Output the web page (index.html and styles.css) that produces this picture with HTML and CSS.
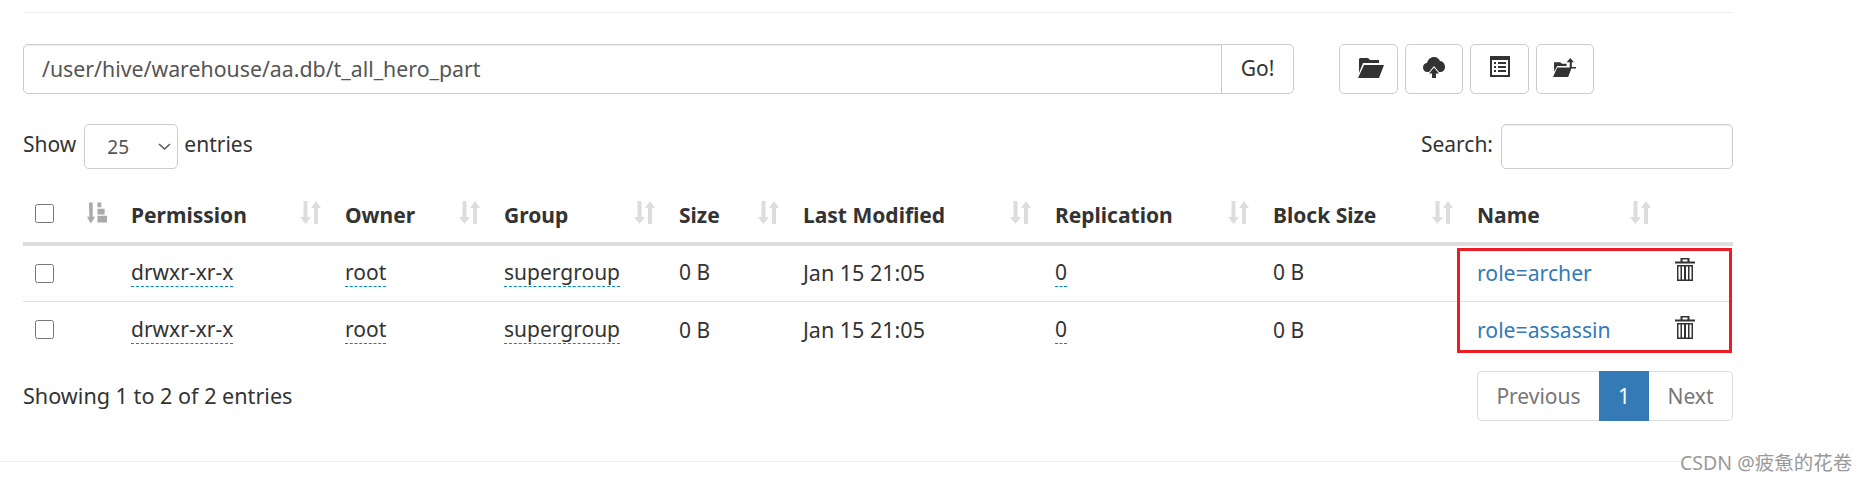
FILE: index.html
```html
<!DOCTYPE html>
<html lang="en">
<head>
<meta charset="utf-8">
<title>Browse Directory</title>
<link rel="stylesheet" href="styles.css">
</head>
<body>
<svg class="defs" width="0" height="0" aria-hidden="true">
  <symbol id="sort" viewBox="0 0 21 23"><path d="M3.500 0h4v16h3.500l-5.500 7-5.500-7h3.500z M16 0l5 7h-3v16h-4V7h-3z"/></symbol>
  <symbol id="sorted" viewBox="0 0 21 22"><path d="M2 0h4v15h2.500l-4.500 7-4-7h2.500z M11 0h4v5h-4z M11 6.500h7.500v6h-7.500z M11 14h10v7h-10z"/></symbol>
  <symbol id="folder" viewBox="0 0 26 20"><path d="M2 0h8l2 2h9v3H5L1 15V1z M6 7h20l-5 13H0z"/></symbol>
  <symbol id="cloud" viewBox="0 0 22 21"><path d="M4 15C1 15 0 12 0 10 0 8 2 6 4 6 5 2 8 0 11 0c3 0 5 2 6 4 3 0 5 3 5 6s-2 5-5 5h-1l-5-6-5 6z M11 10.500l5 6h-3v4.500h-4v-4.500h-3z"/></symbol>
  <symbol id="list" viewBox="0 0 20 21"><path fill-rule="evenodd" d="M0 0h20v21H0z M2 4v15h16V4z M4 6h2v2H4z M8 6h8v2H8z M4 10h2v2H4z M8 10h8v2H8z M4 14h2v2H4z M8 14h8v2H8z"/></symbol>
  <symbol id="folderup" viewBox="0 0 22 18"><path d="M1 4h6l1.500 1.500H13v2H4L1 13z M4 9h14l-3.500 9H0z M16.500 0l3.500 4h-2v4.500h4V10h-6V4h-3z"/></symbol>
  <symbol id="trash" viewBox="0 0 20 23"><path fill-rule="evenodd" d="M5.500 0h9v3.500H20v2H0v-2h5.500z M7.500 1.500v2h5v-2z M2 7h16v16H2z M3.500 8.500v13h2v-13z M7 8.500v13h2v-13z M11 8.500v13h2v-13z M14.500 8.500v13h2v-13z"/></symbol>
  <symbol id="chev" viewBox="0 0 13 7"><path d="M1 1l5.500 5L12 1" fill="none" stroke="#555" stroke-width="1.500"/></symbol>
</svg>
<div class="page">
  <hr class="top-rule">
  <div class="toolbar">
    <div class="path-group">
      <input class="path-input" type="text" value="/user/hive/warehouse/aa.db/t_all_hero_part">
      <button class="btn go">Go!</button>
    </div>
    <div class="actions">
      <button class="btn icon-btn"><svg class="ic-folder"><use href="#folder"/></svg></button>
      <button class="btn icon-btn"><svg class="ic-cloud"><use href="#cloud"/></svg></button>
      <button class="btn icon-btn"><svg class="ic-list"><use href="#list"/></svg></button>
      <button class="btn icon-btn"><svg class="ic-folderup"><use href="#folderup"/></svg></button>
    </div>
  </div>
  <div class="controls">
    <label class="length">Show <span class="select-wrap"><select class="length-select"><option>25</option></select><svg class="chev"><use href="#chev"/></svg></span> entries</label>
    <label class="search">Search: <input class="search-input" type="text"></label>
  </div>
  <table class="files">
    <colgroup>
      <col class="c0"><col class="c1"><col class="c2"><col class="c3"><col class="c4"><col class="c5"><col class="c6"><col class="c7"><col class="c8"><col class="c9"><col class="c10">
    </colgroup>
    <thead>
      <tr>
        <th><input class="check head-check" type="checkbox"></th>
        <th><div class="th-in end"><svg class="sort-on"><use href="#sorted"/></svg></div></th>
        <th><div class="th-in">Permission<svg class="sort"><use href="#sort"/></svg></div></th>
        <th><div class="th-in">Owner<svg class="sort"><use href="#sort"/></svg></div></th>
        <th><div class="th-in">Group<svg class="sort"><use href="#sort"/></svg></div></th>
        <th><div class="th-in">Size<svg class="sort"><use href="#sort"/></svg></div></th>
        <th><div class="th-in">Last Modified<svg class="sort"><use href="#sort"/></svg></div></th>
        <th><div class="th-in">Replication<svg class="sort"><use href="#sort"/></svg></div></th>
        <th><div class="th-in">Block Size<svg class="sort"><use href="#sort"/></svg></div></th>
        <th><div class="th-in">Name<svg class="sort"><use href="#sort"/></svg></div></th>
        <th></th>
      </tr>
    </thead>
    <tbody>
      <tr>
        <td><input class="check" type="checkbox"></td><td></td>
        <td><span class="edit">drwxr-xr-x</span></td>
        <td><span class="edit">root</span></td>
        <td><span class="edit">supergroup</span></td>
        <td>0 B</td>
        <td class="date">Jan 15 21:05</td>
        <td><span class="edit">0</span></td>
        <td>0 B</td>
        <td><a class="link" href="#">role=archer</a></td>
        <td><svg class="ic-trash"><use href="#trash"/></svg></td>
      </tr>
      <tr>
        <td><input class="check" type="checkbox"></td><td></td>
        <td><span class="edit">drwxr-xr-x</span></td>
        <td><span class="edit">root</span></td>
        <td><span class="edit">supergroup</span></td>
        <td>0 B</td>
        <td class="date">Jan 15 21:05</td>
        <td><span class="edit">0</span></td>
        <td>0 B</td>
        <td><a class="link" href="#">role=assassin</a></td>
        <td><svg class="ic-trash"><use href="#trash"/></svg></td>
      </tr>
    </tbody>
  </table>
  <div class="footer-row">
    <div class="info">Showing 1 to 2 of 2 entries</div>
    <nav class="pager">
      <a class="pg prev">Previous</a><a class="pg active">1</a><a class="pg next">Next</a>
    </nav>
  </div>
  <div class="highlight"></div>
</div>
<hr class="bottom-rule">
<div class="watermark">CSDN @疲惫的花卷</div>
</body>
</html>
```
FILE: styles.css
```css
* { box-sizing: border-box; }
html, body { margin: 0; padding: 0; height: 481px; overflow: hidden; background: #fff; }
body { position: relative; font-family: "Noto Sans", "Noto Sans CJK SC", sans-serif; font-size: 21px; color: #333; }
.defs { display: block; height: 0; }
.page { position: relative; width: 1710px; margin-left: 23px; padding-top: 12px; }
.top-rule { margin: 0; border: 0; border-top: 1px solid #eee; }
.toolbar { display: flex; margin-top: 31px; }
.path-group { display: flex; width: 1271px; height: 50px; }
.path-input { width: 1199px; height: 50px; padding: 0 18px 2px; font: 21.300px "Noto Sans", sans-serif; color: #555; border: 1px solid #ccc; border-radius: 5px 0 0 5px; box-shadow: inset 0 1px 1px rgba(0,0,0,.075); outline: 0; }
.btn { display: flex; align-items: center; justify-content: center; height: 50px; background: #fff; border: 1px solid #ccc; border-radius: 5px; font: 21px "Noto Sans", sans-serif; color: #333; padding: 0 0 2px; }
.go { width: 73px; margin-left: -1px; border-radius: 0 5px 5px 0; }
.actions { display: flex; margin-left: 45px; gap: 7px; }
.icon-btn { width: 58.500px; fill: #333; padding: 0; }
.ic-folder { width: 26px; height: 20px; margin: -3px 0 0 5px; }
.ic-cloud { width: 22px; height: 21px; margin-top: -3px; }
.ic-list { width: 20px; height: 21px; margin: -5px 0 0 2px; }
.ic-folderup { width: 23px; height: 19px; margin-top: -3px; }
.controls { display: flex; justify-content: space-between; margin-top: 30px; height: 45px; line-height: 40px; }
.length, .search { display: flex; align-items: flex-start; }
.length { gap: 6px; }
.search { gap: 8px; }
.select-wrap { position: relative; display: block; width: 94px; height: 45px; margin-left: 2px; }
.length-select { display: block; width: 94px; height: 45px; padding: 0 28px 0 22px; font: 19px "Noto Sans", sans-serif; color: #555; background: #fff; border: 1px solid #ccc; border-radius: 5px; appearance: none; outline: 0; }
.chev { position: absolute; right: 7px; top: 19px; width: 13px; height: 7px; pointer-events: none; }
.search-input { display: block; width: 232px; height: 45px; border: 1px solid #ccc; border-radius: 5px; box-shadow: inset 0 1px 1px rgba(0,0,0,.075); outline: 0; }
.files { width: 1710px; margin-top: 18px; border-collapse: collapse; table-layout: fixed; }
.c0 { width: 54px; } .c1 { width: 44.500px; } .c2 { width: 214px; } .c3 { width: 159px; } .c4 { width: 175px; } .c5 { width: 124px; } .c6 { width: 252px; } .c7 { width: 218px; } .c8 { width: 204px; } .c9 { width: 198.500px; } .c10 { width: 67px; }
.files th { height: 57px; padding: 0 15px 0 9.500px; text-align: left; font-weight: 700; border-bottom: 4px solid #ddd; }
.files th:first-child, .files td:first-child { padding: 0 0 0 12px; }
.th-in { display: flex; justify-content: space-between; align-items: center; }
.th-in.end { justify-content: flex-end; }
.sort { width: 21px; height: 23px; fill: #ddd; margin-top: -4px; }
.sort-on { width: 21px; height: 22px; fill: #aaa; margin-top: -4px; }
.check { display: block; width: 19px; height: 19px; margin: 0; }
.head-check { margin-top: -3px; }
.files td { height: 57px; padding: 0 9.500px; border-top: 1px solid #ddd; }
.files tbody tr:first-child td { border-top: 0; padding-bottom: 2px; }
.files tbody tr:first-child td:first-child { padding: 0 0 0 12px; }
.date { font-size: 21.500px; }
.edit { display: inline-block; line-height: 28px; border-bottom: 1px dashed #08c; }
.link { color: #337ab7; text-decoration: none; font-size: 21.200px; }
.ic-trash { display: block; width: 20px; height: 23px; fill: #333; margin: -5px 0 0 -1px; }
.footer-row { display: flex; justify-content: space-between; align-items: center; margin-top: 13px; }
.info { font-size: 21.600px; padding-bottom: 2px; }
.pager { display: flex; height: 50px; }
.pg { display: flex; align-items: center; justify-content: center; border: 1px solid #ddd; color: #777; }
.prev { width: 122px; border-radius: 5px 0 0 5px; border-right: 0; }
.active { width: 50px; background: #337ab7; border-color: #337ab7; color: #fff; }
.next { width: 84px; border-radius: 0 5px 5px 0; border-left: 0; }
.highlight { position: absolute; left: 1434px; top: 248px; width: 275px; height: 105px; border: 3px solid #ed1c24; pointer-events: none; }
.bottom-rule { position: absolute; left: 0; width: 1733px; top: 461px; margin: 0; border: 0; border-top: 1px solid #eee; }
.watermark { position: absolute; left: 1680px; top: 447px; font: 19.500px "Noto Sans", "Noto Sans CJK SC", sans-serif; color: #999; background: #fff; white-space: nowrap; }
```
